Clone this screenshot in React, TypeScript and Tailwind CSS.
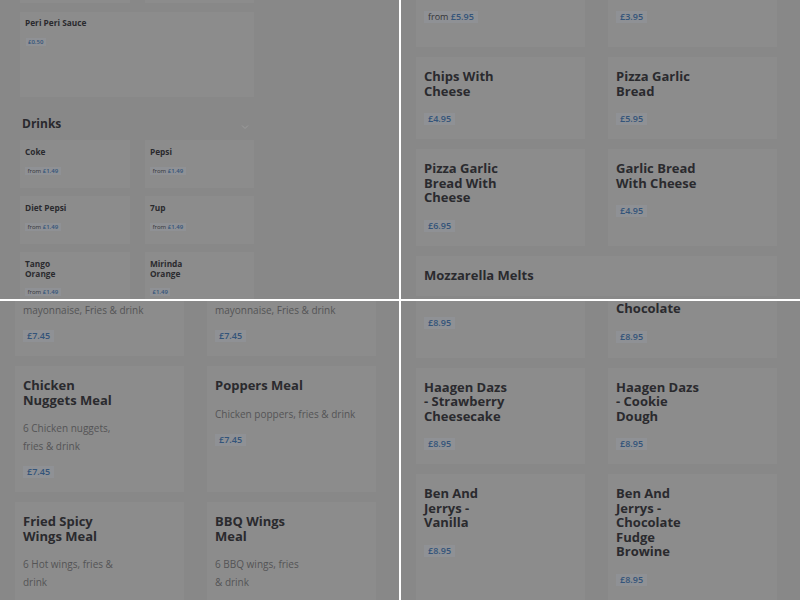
import React from "react";

type CardProps = {
  title?: string[];
  desc?: string[];
  price?: string;
  from?: boolean;
  pt?: string;
  pb?: string;
  span?: boolean;
};

function Price({ value, from }: { value: string; from?: boolean }) {
  return (
    <span className="inline-block px-[4px] bg-[#8f9195] text-[9px] leading-[12px] font-semibold text-[#33547a]">
      {from && <span className="font-normal text-[#333335]">from </span>}
      {value}
    </span>
  );
}

function Card({ title, desc, price, from, pt = "pt-[12px]", pb = "pb-[14px]", span }: CardProps) {
  const priceMt = desc ? "mt-[11px]" : title ? "mt-[15px]" : "mt-0";
  return (
    <div className={`bg-[#8c8c8c] px-[8px] ${pt} ${pb} ${span ? "col-span-2" : ""}`}>
      {title && (
        <div className="text-[13px] leading-[14.5px] font-bold text-[#2a2a2e]">
          {title.map((l) => (
            <div key={l}>{l}</div>
          ))}
        </div>
      )}
      {desc && (
        <div className={`${title ? "mt-[12px]" : ""} text-[10px] leading-[18px] text-[#545456]`}>
          {desc.map((l) => (
            <div key={l}>{l}</div>
          ))}
        </div>
      )}
      {price && (
        <div className={`flex ${priceMt}`}>
          <Price value={price} from={from} />
        </div>
      )}
    </div>
  );
}

function SmallPrice({ value, from }: { value: string; from?: boolean }) {
  return (
    <span className="inline-block px-[2.5px] bg-[#8f9195] text-[6px] leading-[8px] font-semibold text-[#33547a]">
      {from && <span className="font-normal text-[#333335]">from </span>}
      {value}
    </span>
  );
}

function SmallCard({ title, price, from }: { title: string[]; price: string; from?: boolean }) {
  return (
    <div className="bg-[#8c8c8c] pl-[5px] pt-[7.5px] pb-[13px]">
      <div className="text-[8.3px] leading-[9.5px] font-bold text-[#2a2a2e]">
        {title.map((l) => (
          <div key={l}>{l}</div>
        ))}
      </div>
      <div className="flex mt-[10px]">
        <SmallPrice value={price} from={from} />
      </div>
    </div>
  );
}

function TopLeft() {
  return (
    <div className="bg-[#888888] overflow-hidden">
      <div className="pl-[20px] w-[254px]">
        <div className="grid grid-cols-[110px_109px] gap-x-[15px]">
          <div className="h-[3px] bg-[#8c8c8c]" />
          <div className="h-[3px] bg-[#8c8c8c]" />
        </div>
        <div className="mt-[8.5px] h-[85px] bg-[#8c8c8c] pl-[5px] pt-[6.5px]">
          <div className="text-[8.3px] leading-[9.5px] font-bold text-[#2a2a2e]">Peri Peri Sauce</div>
          <div className="flex mt-[10px] pl-[0.5px]">
            <SmallPrice value="£0.50" />
          </div>
        </div>
        <div className="mt-[19.5px] flex items-center justify-between pl-[2px] pr-[5px]">
          <span className="text-[12px] leading-[16px] font-bold text-[#29292d]">Drinks</span>
          <svg width="8" height="6" viewBox="0 0 8 6" className="mt-[5px]">
            <path d="M1 1.5 L4 4.5 L7 1.5" fill="none" stroke="#9c9c9c" strokeWidth="1" />
          </svg>
        </div>
        <div className="mt-[7.7px] grid grid-cols-[110px_109px] gap-x-[15px] gap-y-[8px]">
          <SmallCard title={["Coke"]} price="£1.49" from />
          <SmallCard title={["Pepsi"]} price="£1.49" from />
          <SmallCard title={["Diet Pepsi"]} price="£1.49" from />
          <SmallCard title={["7up"]} price="£1.49" from />
          <SmallCard title={["Tango", "Orange"]} price="£1.49" from />
          <SmallCard title={["Mirinda", "Orange"]} price="£1.49" />
        </div>
      </div>
    </div>
  );
}

function TopRight() {
  return (
    <div className="bg-[#888888] overflow-hidden">
      <div className="pl-[15px] grid grid-cols-[169px_169px] gap-x-[23px] gap-y-[10px]">
        <div className="bg-[#8c8c8c] h-[47px] px-[8px] pt-[11px]">
          <div className="flex">
            <Price value="£5.95" from />
          </div>
        </div>
        <div className="bg-[#8c8c8c] h-[47px] px-[8px] pt-[11px]">
          <div className="flex">
            <Price value="£3.95" />
          </div>
        </div>
        <Card title={["Chips With", "Cheese"]} price="£4.95" />
        <Card title={["Pizza Garlic", "Bread"]} price="£5.95" />
        <Card title={["Pizza Garlic", "Bread With", "Cheese"]} price="£6.95" />
        <Card title={["Garlic Bread", "With Cheese"]} price="£4.95" />
        <Card title={["Mozzarella Melts"]} span />
      </div>
    </div>
  );
}

function BottomLeft() {
  return (
    <div className="bg-[#888888] overflow-hidden">
      <div className="pl-[15px] grid grid-cols-[169px_169px] gap-x-[23px] gap-y-[10px]">
        <Card desc={["mayonnaise, Fries & drink"]} price="£7.45" pt="pt-0" />
        <Card desc={["mayonnaise, Fries & drink"]} price="£7.45" pt="pt-0" />
        <Card title={["Chicken", "Nuggets Meal"]} desc={["6 Chicken nuggets,", "fries & drink"]} price="£7.45" />
        <Card title={["Poppers Meal"]} desc={["Chicken poppers, fries & drink"]} price="£7.45" />
        <Card title={["Fried Spicy", "Wings Meal"]} desc={["6 Hot wings, fries &", "drink"]} price="£7.45" />
        <Card title={["BBQ Wings", "Meal"]} desc={["6 BBQ wings, fries", "& drink"]} price="£7.45" />
      </div>
    </div>
  );
}

function BottomRight() {
  return (
    <div className="bg-[#888888] overflow-hidden">
      <div className="pl-[15px] grid grid-cols-[169px_169px] gap-x-[23px] gap-y-[10px]">
        <Card price="£8.95" pt="pt-[16px]" />
        <Card title={["Chocolate"]} price="£8.95" pt="pt-0" pb="pb-[15px]" />
        <Card title={["Haagen Dazs", "- Strawberry", "Cheesecake"]} price="£8.95" />
        <Card title={["Haagen Dazs", "- Cookie", "Dough"]} price="£8.95" />
        <Card title={["Ben And", "Jerrys -", "Vanilla"]} price="£8.95" />
        <Card title={["Ben And", "Jerrys -", "Chocolate", "Fudge", "Browine"]} price="£8.95" />
      </div>
    </div>
  );
}

export default function App() {
  return (
    <div className="w-[800px] h-[600px] bg-white grid grid-cols-[399px_399px] grid-rows-[299px_299px] gap-[2px] font-['Open_Sans',sans-serif] overflow-hidden">
      <TopLeft />
      <TopRight />
      <BottomLeft />
      <BottomRight />
    </div>
  );
}
